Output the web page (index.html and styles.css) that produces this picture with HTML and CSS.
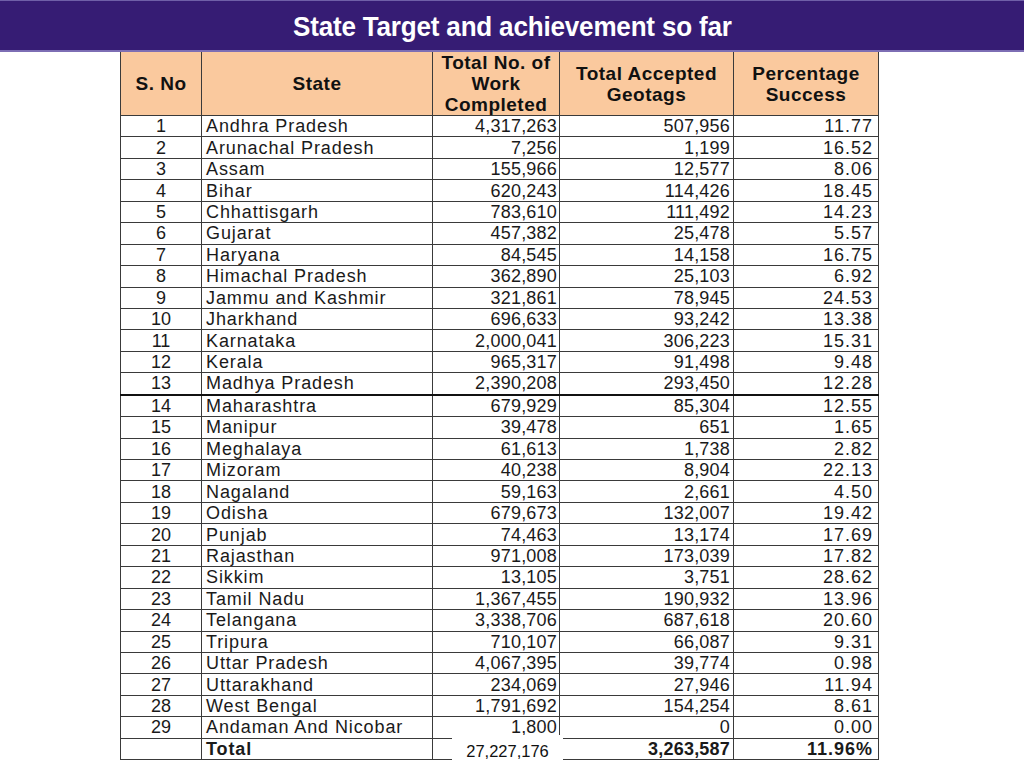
FILE: index.html
```html
<!DOCTYPE html>
<html>
<head>
<meta charset="utf-8">
<link rel="stylesheet" href="styles.css">
</head>
<body>
<header class="titlebar"><h1 class="title">State Target and achievement so far</h1></header>
<div class="wrap">
<table class="grid">
<colgroup><col class="c1"><col class="c2"><col class="c3"><col class="c4"><col class="c5"></colgroup>
<thead>
<tr><th>S. No</th><th>State</th><th>Total No. of<br>Work<br>Completed</th><th>Total Accepted<br>Geotags</th><th>Percentage<br>Success</th></tr>
</thead>
<tbody>
<tr><td class="sn">1</td><td class="st">Andhra Pradesh</td><td class="num">4,317,263</td><td class="num n2">507,956</td><td class="pct">11.77</td></tr>
<tr><td class="sn">2</td><td class="st">Arunachal Pradesh</td><td class="num">7,256</td><td class="num n2">1,199</td><td class="pct">16.52</td></tr>
<tr><td class="sn">3</td><td class="st">Assam</td><td class="num">155,966</td><td class="num n2">12,577</td><td class="pct">8.06</td></tr>
<tr><td class="sn">4</td><td class="st">Bihar</td><td class="num">620,243</td><td class="num n2">114,426</td><td class="pct">18.45</td></tr>
<tr><td class="sn">5</td><td class="st">Chhattisgarh</td><td class="num">783,610</td><td class="num n2">111,492</td><td class="pct">14.23</td></tr>
<tr><td class="sn">6</td><td class="st">Gujarat</td><td class="num">457,382</td><td class="num n2">25,478</td><td class="pct">5.57</td></tr>
<tr><td class="sn">7</td><td class="st">Haryana</td><td class="num">84,545</td><td class="num n2">14,158</td><td class="pct">16.75</td></tr>
<tr><td class="sn">8</td><td class="st">Himachal Pradesh</td><td class="num">362,890</td><td class="num n2">25,103</td><td class="pct">6.92</td></tr>
<tr><td class="sn">9</td><td class="st">Jammu and Kashmir</td><td class="num">321,861</td><td class="num n2">78,945</td><td class="pct">24.53</td></tr>
<tr><td class="sn">10</td><td class="st">Jharkhand</td><td class="num">696,633</td><td class="num n2">93,242</td><td class="pct">13.38</td></tr>
<tr><td class="sn">11</td><td class="st">Karnataka</td><td class="num">2,000,041</td><td class="num n2">306,223</td><td class="pct">15.31</td></tr>
<tr><td class="sn">12</td><td class="st">Kerala</td><td class="num">965,317</td><td class="num n2">91,498</td><td class="pct">9.48</td></tr>
<tr class="thick"><td class="sn">13</td><td class="st">Madhya Pradesh</td><td class="num">2,390,208</td><td class="num n2">293,450</td><td class="pct">12.28</td></tr>
<tr><td class="sn">14</td><td class="st">Maharashtra</td><td class="num">679,929</td><td class="num n2">85,304</td><td class="pct">12.55</td></tr>
<tr><td class="sn">15</td><td class="st">Manipur</td><td class="num">39,478</td><td class="num n2">651</td><td class="pct">1.65</td></tr>
<tr><td class="sn">16</td><td class="st">Meghalaya</td><td class="num">61,613</td><td class="num n2">1,738</td><td class="pct">2.82</td></tr>
<tr><td class="sn">17</td><td class="st">Mizoram</td><td class="num">40,238</td><td class="num n2">8,904</td><td class="pct">22.13</td></tr>
<tr><td class="sn">18</td><td class="st">Nagaland</td><td class="num">59,163</td><td class="num n2">2,661</td><td class="pct">4.50</td></tr>
<tr><td class="sn">19</td><td class="st">Odisha</td><td class="num">679,673</td><td class="num n2">132,007</td><td class="pct">19.42</td></tr>
<tr><td class="sn">20</td><td class="st">Punjab</td><td class="num">74,463</td><td class="num n2">13,174</td><td class="pct">17.69</td></tr>
<tr><td class="sn">21</td><td class="st">Rajasthan</td><td class="num">971,008</td><td class="num n2">173,039</td><td class="pct">17.82</td></tr>
<tr><td class="sn">22</td><td class="st">Sikkim</td><td class="num">13,105</td><td class="num n2">3,751</td><td class="pct">28.62</td></tr>
<tr><td class="sn">23</td><td class="st">Tamil Nadu</td><td class="num">1,367,455</td><td class="num n2">190,932</td><td class="pct">13.96</td></tr>
<tr><td class="sn">24</td><td class="st">Telangana</td><td class="num">3,338,706</td><td class="num n2">687,618</td><td class="pct">20.60</td></tr>
<tr><td class="sn">25</td><td class="st">Tripura</td><td class="num">710,107</td><td class="num n2">66,087</td><td class="pct">9.31</td></tr>
<tr><td class="sn">26</td><td class="st">Uttar Pradesh</td><td class="num">4,067,395</td><td class="num n2">39,774</td><td class="pct">0.98</td></tr>
<tr><td class="sn">27</td><td class="st">Uttarakhand</td><td class="num">234,069</td><td class="num n2">27,946</td><td class="pct">11.94</td></tr>
<tr><td class="sn">28</td><td class="st">West Bengal</td><td class="num">1,791,692</td><td class="num n2">154,254</td><td class="pct">8.61</td></tr>
<tr><td class="sn">29</td><td class="st">Andaman And Nicobar</td><td class="num">1,800</td><td class="num n2">0</td><td class="pct">0.00</td></tr>
<tr class="total"><td class="sn"></td><td class="st">Total</td><td class="num"></td><td class="num n2">3,263,587</td><td class="pct">11.96%</td></tr>
</tbody>
</table>
<div class="overlay">27,227,176</div>
</div>
</body>
</html>
```

FILE: styles.css
```css
html, body {
  margin: 0;
  padding: 0;
  background: #ffffff;
}
body {
  font-family: "Liberation Sans", Arial, sans-serif;
  color: #1a1a1a;
}
.titlebar {
  height: 49px;
  background: #361c74;
  border-top: 1px solid #6f5fa8;
  border-bottom: 2px solid #7d6eb4;
  display: flex;
  align-items: center;
  justify-content: center;
}
.title {
  margin: 0;
  color: #ffffff;
  font-family: "Liberation Sans Narrow", "Liberation Sans", Arial, sans-serif;
  font-weight: bold;
  font-size: 27px;
  letter-spacing: -0.2px;
  padding-top: 4px;
  transform: scaleX(0.965);
}
.wrap {
  position: relative;
  margin-left: 120px;
  width: 758px;
}
.grid {
  border-collapse: collapse;
  table-layout: fixed;
  width: 758px;
}
.c1 { width: 81px; }
.c2 { width: 231px; }
.c3 { width: 127px; }
.c4 { width: 174px; }
.c5 { width: 145px; }
.grid th {
  background: #fac99e;
  border: 1px solid #3a3a3a;
  border-top: none;
  height: 63px;
  padding: 0;
  font-size: 19px;
  line-height: 21px;
  letter-spacing: 0.5px;
  font-weight: bold;
  color: #111;
  text-align: center;
  vertical-align: middle;
}
.grid td {
  border: 1px solid #3a3a3a;
  height: 20.45px;
  padding: 0;
  font-size: 18px;
  line-height: 20px;
  white-space: nowrap;
  overflow: hidden;
  vertical-align: middle;
}
.sn { text-align: center; }
.st { text-align: left; padding-left: 4px !important; letter-spacing: 0.9px; }
.num { text-align: right; padding-right: 2px !important; letter-spacing: 0.2px; }
.n2 { padding-right: 3px !important; }
.pct { text-align: right; padding-right: 5px !important; letter-spacing: 1px; }
.thick td { border-bottom: 2px solid #111; }
.total td { font-weight: bold; }
.overlay {
  position: absolute;
  left: 332px;
  top: 683px;
  width: 111px;
  height: 40px;
  background: #ffffff;
  font-size: 16.5px;
  line-height: 16px;
  padding-top: 8px;
  box-sizing: border-box;
  text-align: center;
  color: #111;
}
```
